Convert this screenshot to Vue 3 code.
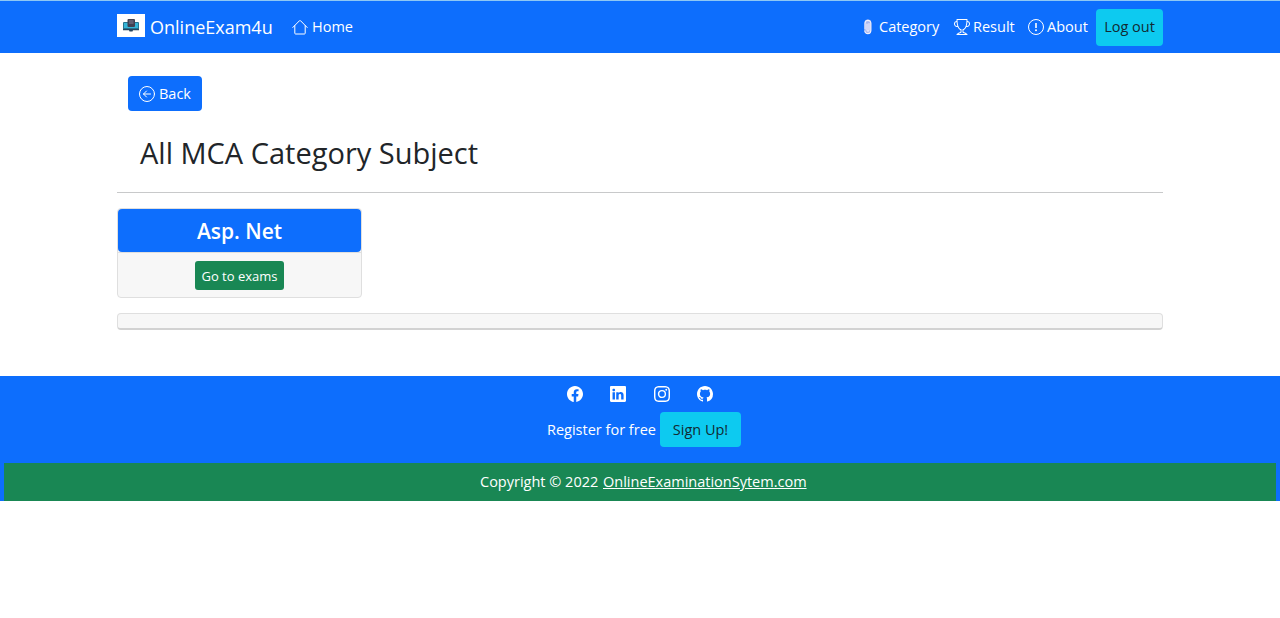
<script setup>
const socials = [
  {
    name: 'Facebook',
    d: 'M16 8.049c0-4.446-3.582-8.05-8-8.05C3.58 0-.002 3.603-.002 8.05c0 4.017 2.926 7.347 6.75 7.951v-5.625h-2.03V8.05H6.75V6.275c0-2.017 1.195-3.131 3.022-3.131.876 0 1.791.157 1.791.157v1.98h-1.009c-.993 0-1.303.621-1.303 1.258v1.51h2.218l-.354 2.326H9.25V16c3.824-.604 6.75-3.934 6.75-7.951z',
  },
  {
    name: 'LinkedIn',
    d: 'M0 1.146C0 .513.526 0 1.175 0h13.65C15.474 0 16 .513 16 1.146v13.708c0 .633-.526 1.146-1.175 1.146H1.175C.526 16 0 15.487 0 14.854V1.146zm4.943 12.248V6.169H2.542v7.225h2.401zm-1.2-8.212c.837 0 1.358-.554 1.358-1.248-.015-.709-.52-1.248-1.342-1.248-.822 0-1.359.54-1.359 1.248 0 .694.521 1.248 1.327 1.248h.016zm4.908 8.212V9.359c0-.216.016-.432.08-.586.173-.431.568-.878 1.232-.878.869 0 1.216.662 1.216 1.634v3.865h2.401V9.25c0-2.22-1.184-3.252-2.764-3.252-1.274 0-1.845.7-2.165 1.193v.025h-.016a5.54 5.54 0 0 1 .016-.025V6.169h-2.4c.03.678 0 7.225 0 7.225h2.4z',
  },
  {
    name: 'Instagram',
    d: 'M8 0C5.829 0 5.556.01 4.703.048 3.85.088 3.269.222 2.76.42a3.917 3.917 0 0 0-1.417.923A3.927 3.927 0 0 0 .42 2.76C.222 3.268.087 3.85.048 4.7.01 5.555 0 5.827 0 8.001c0 2.172.01 2.444.048 3.297.04.852.174 1.433.372 1.942.205.526.478.972.923 1.417.444.445.89.719 1.416.923.51.198 1.09.333 1.942.372C5.555 15.99 5.827 16 8 16s2.444-.01 3.298-.048c.851-.04 1.434-.174 1.943-.372a3.916 3.916 0 0 0 1.416-.923c.445-.445.718-.891.923-1.417.197-.509.332-1.09.372-1.942C15.99 10.445 16 10.173 16 8s-.01-2.445-.048-3.299c-.04-.851-.175-1.433-.372-1.941a3.926 3.926 0 0 0-.923-1.417A3.911 3.911 0 0 0 13.24.42c-.51-.198-1.092-.333-1.943-.372C10.443.01 10.172 0 7.998 0h.003zm-.717 1.442h.718c2.136 0 2.389.007 3.232.046.78.035 1.204.166 1.486.275.373.145.64.319.92.599.28.28.453.546.598.92.11.281.24.705.275 1.485.039.843.047 1.096.047 3.231s-.008 2.389-.047 3.232c-.035.78-.166 1.203-.275 1.485a2.47 2.47 0 0 1-.599.919c-.28.28-.546.453-.92.598-.28.11-.704.24-1.485.276-.843.038-1.096.047-3.232.047s-2.39-.009-3.233-.047c-.78-.036-1.203-.166-1.485-.276a2.478 2.478 0 0 1-.92-.598 2.48 2.48 0 0 1-.6-.92c-.109-.281-.24-.705-.275-1.485-.038-.843-.046-1.096-.046-3.233 0-2.136.008-2.388.046-3.231.036-.78.166-1.204.276-1.486.145-.373.319-.64.599-.92.28-.28.546-.453.92-.598.282-.11.705-.24 1.485-.276.738-.034 1.024-.044 2.515-.045v.002zm4.988 1.328a.96.96 0 1 0 0 1.92.96.96 0 0 0 0-1.92zm-4.27 1.122a4.109 4.109 0 1 0 0 8.217 4.109 4.109 0 0 0 0-8.217zm0 1.441a2.667 2.667 0 1 1 0 5.334 2.667 2.667 0 0 1 0-5.334z',
  },
  {
    name: 'GitHub',
    d: 'M8 0C3.58 0 0 3.58 0 8c0 3.54 2.29 6.53 5.47 7.59.4.07.55-.17.55-.38 0-.19-.01-.82-.01-1.49-2.01.37-2.53-.49-2.69-.94-.09-.23-.48-.94-.82-1.13-.28-.15-.68-.52-.01-.53.63-.01 1.08.58 1.23.82.72 1.21 1.87.87 2.33.66.07-.52.28-.87.51-1.07-1.78-.2-3.64-.89-3.64-3.95 0-.87.31-1.59.82-2.15-.08-.2-.36-1.02.08-2.12 0 0 .67-.21 2.2.82.64-.18 1.32-.27 2-.27.68 0 1.36.09 2 .27 1.53-1.04 2.2-.82 2.2-.82.44 1.1.16 1.92.08 2.12.51.56.82 1.27.82 2.15 0 3.07-1.87 3.75-3.65 3.95.29.25.54.73.54 1.48 0 1.07-.01 1.93-.01 2.2 0 .21.15.46.55.38A8.012 8.012 0 0 0 16 8c0-4.42-3.58-8-8-8z',
  },
]
</script>

<template>
  <div class="page">
    <nav class="navbar">
      <div class="container nav-inner">
        <a class="brand">
          <svg class="logo" viewBox="0 0 28 23">
            <rect width="28" height="23" fill="#fff" />
            <rect x="6" y="8" width="16" height="8" rx="1" fill="#26748f" />
            <path d="M7 9h14v5H7z" fill="#36b5d8" />
            <rect x="10.5" y="5" width="7.5" height="8" rx="1" fill="#414052" />
            <path d="M12 7h4.500M12 9h4.500" stroke="#817c91" />
            <path d="M6 15h16v1.300h-6l-.5 1.200h-3L12 16.300H6z" fill="#24445e" />
          </svg>
          <span class="brand-text">OnlineExam4u</span>
        </a>
        <a class="nav-link home">
          <svg class="icon" viewBox="0 0 16 16" fill="none" stroke="currentColor" stroke-linecap="round" stroke-linejoin="round">
            <path d="M.8 8.500 7.500 1.700q.5-.5 1 0l6.700 6.800M2.800 6.700v7.500q0 .8.8.8h8.800q.8 0 .8-.8V6.700" />
          </svg>
          <span class="t-home">Home</span>
        </a>
        <div class="nav-right">
          <a class="nav-link category">
            <svg class="clip" viewBox="0 0 10 16" fill="none">
              <path d="M1.500 4a3.400 3.400 0 0 1 6.800 0v7.500a3.400 3.400 0 0 1-6.800 0z" fill="#a9b8ef" />
              <path d="M2 10V4.200C2 .4 7.800.4 7.800 4.200v7.300c0 4.200-6 4-6 .3M4 5v6c0 1.600 2 1.600 2 0V4.500" stroke="#f0effc" stroke-width="1.100" stroke-linecap="round" />
            </svg>
            <span class="t-category">Category</span>
          </a>
          <a class="nav-link result">
            <svg class="icon" viewBox="0 0 16 16" fill="currentColor">
              <path d="M2.500.5A.5.5 0 0 1 3 0h10a.5.5 0 0 1 .5.5c0 .538-.012 1.050-.034 1.536a3 3 0 1 1-1.133 5.890c-.790 1.865-1.878 2.777-2.833 3.011v2.173l1.425.356c.194.048.377.135.537.255L13.300 15.100a.5.5 0 0 1-.3.900H3a.5.5 0 0 1-.3-.900l1.838-1.379c.160-.120.343-.207.537-.255L6.500 13.110v-2.173c-.955-.234-2.043-1.146-2.833-3.012a3 3 0 1 1-1.132-5.890A33.076 33.076 0 0 1 2.500.5zm.099 2.540a2 2 0 0 0 .720 3.935c-.333-1.050-.588-2.346-.720-3.935zm10.083 3.935a2 2 0 0 0 .720-3.935c-.133 1.590-.388 2.885-.720 3.935zM3.504 1c.007.517.026 1.006.056 1.469.130 2.028.457 3.546.870 4.667C5.294 9.480 6.484 10 7 10a.5.5 0 0 1 .5.5v2.610a1 1 0 0 1-.757.970l-1.426.356a.5.5 0 0 0-.179.085L4.500 15h7l-.638-.479a.501.501 0 0 0-.180-.085l-1.425-.356a1 1 0 0 1-.757-.970V10.500A.5.5 0 0 1 9 10c.516 0 1.706-.520 2.570-2.864.413-1.120.740-2.640.870-4.667.030-.463.049-.952.056-1.469H3.504z" />
            </svg>
            <span class="t-result">Result</span>
          </a>
          <a class="nav-link about">
            <svg class="icon" viewBox="0 0 16 16" fill="none" stroke="currentColor">
              <circle cx="8" cy="8" r="7.500" />
              <path d="M8 4v5" stroke-width="1.600" />
              <circle cx="8" cy="11.200" r="1" fill="currentColor" stroke="none" />
            </svg>
            <span class="t-about">About</span>
          </a>
          <button class="btn info logout"><span class="t-logout">Log out</span></button>
        </div>
      </div>
    </nav>

    <main class="container content">
      <button class="btn back">
        <svg class="icon" viewBox="0 0 16 16" fill="none" stroke="currentColor" stroke-linecap="round" stroke-linejoin="round">
          <circle cx="8" cy="8" r="7.500" />
          <path d="M11.500 8h-7M7.500 5l-3 3 3 3" />
        </svg>
        <span class="t-back">Back</span>
      </button>
      <h1 class="title"><span class="t-title">All MCA Category Subject</span></h1>
      <hr class="rule" />
      <section class="card">
        <h2 class="card-head"><span class="t-card">Asp. Net</span></h2>
        <div class="card-foot">
          <button class="btn success"><span class="t-go">Go to exams</span></button>
        </div>
      </section>
      <div class="strip"></div>
    </main>

    <footer class="footer">
      <div class="socials">
        <svg v-for="s in socials" :key="s.name" class="social" viewBox="0 0 16 16" fill="currentColor">
          <path :d="s.d" />
        </svg>
      </div>
      <div class="register">
        <span class="t-register">Register for free</span>
        <button class="btn info signup"><span class="t-signup">Sign Up!</span></button>
      </div>
      <div class="copyright">
        <span class="t-copy">Copyright © 2022</span>
        <a class="t-site">OnlineExaminationSytem.com</a>
      </div>
    </footer>
  </div>
</template>

<style>
body {
  margin: 0;
  background: #fff;
}
</style>

<style scoped>
.page {
  height: 618px;
  overflow: hidden;
  font-family: "Open Sans", "Noto Sans", sans-serif;
  font-size: 14.5px;
  line-height: 22px;
  color: #212529;
}
.page * {
  box-sizing: border-box;
}
.page span,
.page a {
  white-space: nowrap;
}
.container {
  width: 1046px;
  margin: 0 auto;
}
.navbar {
  height: 53px;
  border-top: 1px solid #8ec8f4;
  background: #0d6efd;
  color: #fff;
}
.nav-inner {
  height: 52px;
  display: flex;
  align-items: center;
}
.brand {
  display: flex;
  align-items: center;
  gap: 5px;
  width: 175px;
}
.logo {
  width: 28px;
  height: 23px;
  margin-top: -3px;
}
.brand-text {
  font-size: 18px;
}
.nav-link,
.btn {
  display: flex;
  align-items: center;
}
.nav-link {
  gap: 4px;
}
.icon {
  width: 16px;
  height: 16px;
  flex: none;
}
.clip {
  width: 10px;
  height: 16px;
  flex: none;
}
.nav-right {
  display: flex;
  align-items: center;
  margin-left: auto;
}
.category {
  width: 91px;
  gap: 6px;
}
.result {
  width: 74px;
  gap: 3px;
}
.about {
  width: 68px;
  gap: 3px;
}
.btn {
  justify-content: center;
  border: 0;
  padding: 0;
  border-radius: 4px;
  font: inherit;
  color: #fff;
}
.info {
  background: #0dcaf0;
  color: #122a33;
}
.logout {
  width: 67px;
  height: 37px;
}
.content {
  height: 323px;
  padding-top: 23px;
}
.back {
  width: 74px;
  height: 35px;
  margin-left: 11px;
  gap: 4px;
  background: #0d6efd;
}
.title {
  margin: 23px 0 0 23px;
  height: 38px;
  font-size: 29px;
  line-height: 38px;
  font-weight: 500;
}
.rule {
  margin: 20px 0 0;
  border: 0;
  height: 1px;
  background: #c8c9ca;
}
.card {
  width: 245px;
  height: 90px;
  margin-top: 15px;
  border: 1px solid #dfdfdf;
  border-radius: 4px;
  background: #f7f7f7;
}
.card-head {
  display: flex;
  align-items: center;
  justify-content: center;
  height: 43px;
  margin: 0;
  border-radius: 4px;
  background: #0d6efd;
  color: #fff;
  font-size: 21px;
  font-weight: 600;
}
.card-foot {
  display: flex;
  justify-content: center;
  border-top: 1px solid #dfdfdf;
  padding-top: 8px;
}
.success {
  width: 89px;
  height: 29px;
  border-radius: 3px;
  background: #198754;
  font-size: 13px;
}
.strip {
  height: 17px;
  margin-top: 15px;
  border: 1px solid #dfdfdf;
  border-bottom: 2px solid #d2d2d2;
  border-radius: 4px;
  background: #f7f7f7;
}
.footer {
  height: 125px;
  background: #0d6efd;
  color: #fff;
}
.socials {
  display: flex;
  justify-content: center;
  gap: 27.500px;
  padding-top: 10px;
}
.social {
  width: 16px;
  height: 16px;
}
.register {
  display: flex;
  align-items: center;
  margin: 10px 0 0 547px;
}
.t-register {
  width: 113px;
}
.signup {
  width: 81px;
  height: 35px;
}
.copyright {
  display: flex;
  align-items: center;
  height: 38px;
  margin: 16px 4px 0;
  padding-left: 476px;
  background: #198754;
}
.t-copy {
  width: 123px;
}
.t-site {
  text-decoration: underline;
}
</style>
